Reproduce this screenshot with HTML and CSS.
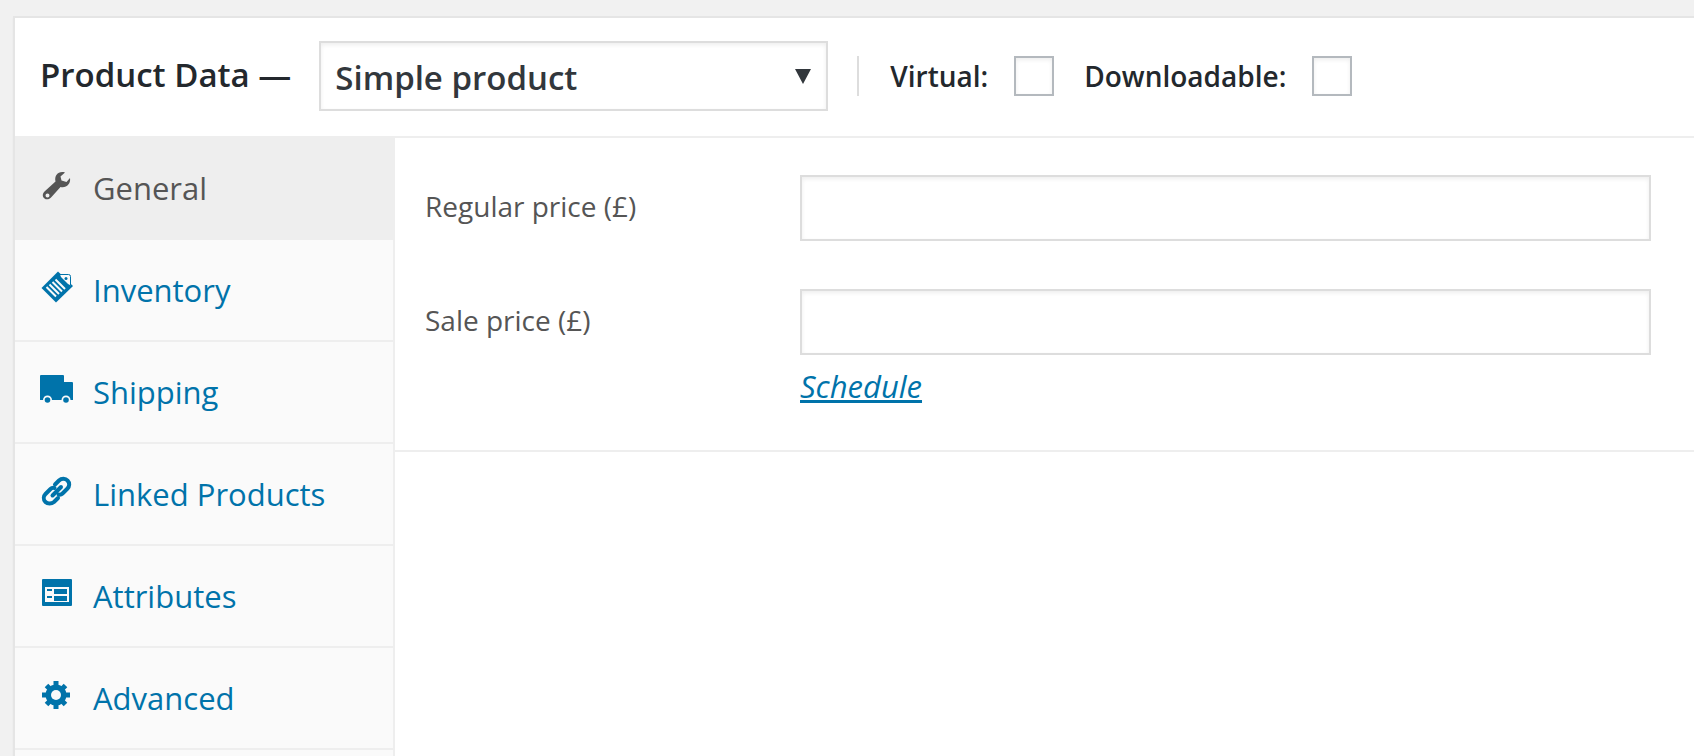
FILE: index.html
```
<!DOCTYPE html>
<html lang="en">
<head>
  <meta charset="UTF-8" />
  <meta name="viewport" content="width=device-width, initial-scale=1" />
  <title>Product Data</title>
  <link rel="stylesheet" href="styles.css">
</head>

<body>
  <form class="product-data">
    <header class="product-header">
      <label class="product-title" for="productType">Product Data —</label>
      <span class="type-select">
        <select id="productType">
          <option selected>Simple product</option>
          <option>Grouped product</option>
          <option>External/Affiliate product</option>
          <option>Variable product</option>
        </select>
      </span>
      <div class="type-options">
        <label class="check">Virtual: <input type="checkbox" id="virtual"></label>
        <label class="check">Downloadable: <input type="checkbox" id="downloadable"></label>
      </div>
    </header>

    <div class="product-body">
      <nav class="tabs">
        <a class="tab active" href="#general">
          <svg class="icon" viewBox="0 0 34 34"><path fill-rule="evenodd" d="M25 4.500C19 2.500 14 7 15.500 13.500L4.500 23.500C2 26 2.500 29 4.500 30.500C6.500 32 9.500 31.500 11.500 29L20.500 19C26 20.500 31 16 30 10L26.500 14L21.500 12.500L20.500 8.500ZM7.500 25.500a2 2 0 1 1 0 4a2 2 0 0 1 0 -4Z"/></svg>
          <span>General</span>
        </a>
        <a class="tab" href="#inventory">
          <svg class="icon" viewBox="0 0 34 34">
            <path d="M18 1.500L33 16L16 32.500L1.500 18Z"/>
            <path class="cut" d="M20 4.500H31V15.500L28 14L21 7Z"/>
            <path class="line" d="M20 4.500H28.500Q30.500 4.500 30.500 6.500V15.500"/>
            <circle cx="26" cy="8.500" r="1.500"/>
            <path class="cut-line" d="M6.500 17L16 26.500M9.500 14.500L19 24M12.500 12L22 21.500M15.500 9.500L25 19"/>
          </svg>
          <span>Inventory</span>
        </a>
        <a class="tab" href="#shipping">
          <svg class="icon" viewBox="0 0 34 34">
            <path d="M0 4Q0 3 1 3H23Q24 3 24 4V10H32Q33 10 33 11V28H0Z"/>
            <circle class="cut" cx="7.500" cy="28" r="4.500"/>
            <circle class="cut" cx="26" cy="28" r="4.500"/>
            <circle cx="7.500" cy="28" r="2.800"/>
            <circle cx="26" cy="28" r="2.800"/>
          </svg>
          <span>Shipping</span>
        </a>
        <a class="tab" href="#linked">
          <svg class="icon" viewBox="0 0 34 34">
            <g class="chain">
              <path d="M15 10.500L19 6.500C21.500 4 25.500 4 27.500 6.500C30 9 29.500 12.500 27.500 14.500L22.500 19.500C21.500 20.500 20 21 18.500 20.500"/>
              <path d="M14.500 14C13 13.500 11.500 14 10.500 15L5.500 20C3.500 22 3 25.500 5.500 28C7.500 30 11.500 30 14 28L18 24"/>
              <path d="M12.500 21.500L21 13"/>
            </g>
          </svg>
          <span>Linked Products</span>
        </a>
        <a class="tab" href="#attributes">
          <svg class="icon" viewBox="0 0 34 34">
            <rect x="2" y="3" width="30" height="27" rx="1"/>
            <path class="cut" d="M5 11H29V26H5Z"/>
            <path d="M7 13H12V15H7ZM7 20H12V22H7ZM14 13H27V18H14ZM14 20H27V25H14Z"/>
          </svg>
          <span>Attributes</span>
        </a>
        <a class="tab" href="#advanced">
          <svg class="icon" viewBox="0 0 34 34">
            <g class="teeth">
              <path d="M16 3V31M2 17H30M6.500 7.500L25.500 26.500M25.500 7.500L6.500 26.500"/>
            </g>
            <circle cx="16" cy="17" r="10.500"/>
            <circle class="cut" cx="16" cy="17" r="5"/>
          </svg>
          <span>Advanced</span>
        </a>
      </nav>

      <section class="panel" id="general">
        <div class="fields">
          <label for="regularPrice">Regular price (£)</label>
          <input type="text" id="regularPrice">
          <label for="salePrice">Sale price (£)</label>
          <input type="text" id="salePrice">
          <a class="schedule" href="#schedule">Schedule</a>
        </div>
      </section>
    </div>
  </form>
</body>
</html>
```

FILE: styles.css
```
* {
  box-sizing: border-box;
}

body {
  margin: 0;
  padding: 16px 0 0 13px;
  background-color: #f1f1f1;
  color: #23282d;
  font-family: "Segoe UI", "Open Sans", "Noto Sans", sans-serif;
}

.product-data {
  display: flex;
  flex-direction: column;
  min-height: calc(100vh - 16px);
  background: #fff;
  border: 2px solid #e5e5e5;
  border-right: none;
  border-bottom: none;
  box-shadow: 0 2px 2px rgba(0, 0, 0, 0.04);
}

.product-header {
  display: flex;
  align-items: center;
  height: 120px;
  padding: 0 25px 2px;
  border-bottom: 2px solid #eee;
  font-weight: 600;
}

.product-title {
  margin-right: 28px;
  padding-bottom: 2px;
  font-size: 33px;
  line-height: 48px;
}

.type-select {
  position: relative;
  width: 509px;
}

.type-select::after {
  content: "";
  position: absolute;
  top: 28px;
  right: 17px;
  border: 8px solid transparent;
  border-top: 15px solid #32373c;
  border-bottom: none;
  pointer-events: none;
}

select,
input {
  margin: 0;
  background: #fff;
  border: 2px solid #ddd;
  border-radius: 0;
  box-shadow: inset 0 2px 4px rgba(0, 0, 0, 0.07);
  color: #32373c;
  font-family: inherit;
  appearance: none;
}

select {
  display: block;
  width: 100%;
  height: 70px;
  padding: 2px 14px 0;
  font-size: 33px;
  font-weight: 600;
}

.type-options {
  display: flex;
  align-items: center;
  gap: 30px;
  height: 40px;
  margin-left: 29px;
  padding-left: 31px;
  border-left: 2px solid #ddd;
}

.check {
  display: flex;
  align-items: center;
  gap: 26px;
  font-size: 28px;
}

.check input {
  width: 40px;
  height: 40px;
  border-color: #b4b9be;
}

.product-body {
  display: flex;
  flex: 1;
}

.tabs {
  width: 380px;
  flex-shrink: 0;
  background: #fafafa;
  border-right: 2px solid #eee;
}

.tab {
  display: flex;
  align-items: center;
  gap: 19px;
  height: 102px;
  padding-left: 25px;
  border-bottom: 2px solid #eee;
  color: #0073aa;
  font-size: 31px;
  text-decoration: none;
}

.tab.active {
  margin-right: -2px;
  background: #eee;
  color: #555;
}

.icon {
  width: 34px;
  height: 34px;
  margin-bottom: 6px;
  fill: currentColor;
}

.icon .cut {
  fill: #fafafa;
}

.icon .line,
.icon .cut-line,
.icon .chain,
.icon .teeth {
  fill: none;
  stroke: currentColor;
  stroke-width: 1;
}

.icon .cut-line {
  stroke: #fafafa;
  stroke-width: 2;
}

.icon .chain {
  stroke-width: 4;
  stroke-linecap: round;
}

.icon .teeth {
  stroke-width: 5;
}

.panel {
  flex: 1;
}

.fields {
  display: grid;
  grid-template-columns: 375px 1fr;
  row-gap: 48px;
  padding: 37px 43px 43px 30px;
  border-bottom: 2px solid #eee;
  color: #555;
  font-size: 28px;
}

.fields label {
  line-height: 62px;
}

.fields input {
  width: 100%;
  height: 66px;
  padding: 0 10px;
  font-size: 28px;
}

.schedule {
  grid-column: 2;
  justify-self: start;
  margin-top: -38px;
  color: #0073aa;
  font-size: 31px;
  font-style: italic;
  line-height: 42px;
}
```
